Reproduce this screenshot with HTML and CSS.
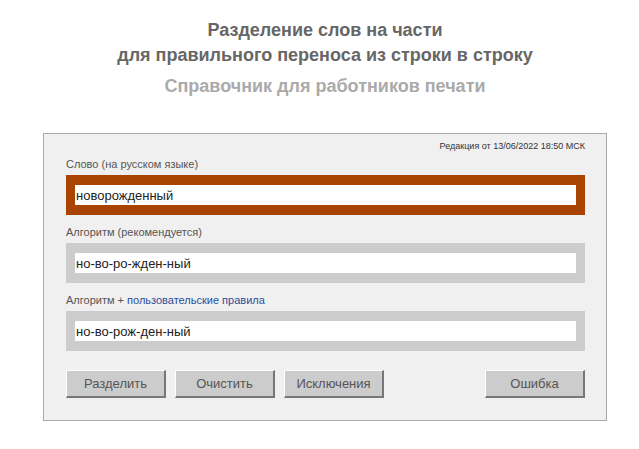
FILE: index.html
```html
<!DOCTYPE html>
<html lang="ru">
<head>
<meta charset="utf-8">
<title>Разделение слов на части</title>
<link rel="stylesheet" href="styles.css">
</head>
<body>
<div class="page">
  <header class="head">
    <h1 class="title">Разделение слов на части<br>для правильного переноса из строки в строку</h1>
    <h2 class="subtitle">Справочник для работников печати</h2>
  </header>
  <main class="panel">
    <div class="edition">Редакция от 13/06/2022 18:50 МСК</div>
    <div class="label">Слово (на русском языке)</div>
    <div class="box box-active"><input class="field" type="text" value="новорожденный"></div>
    <div class="label">Алгоритм (рекомендуется)</div>
    <div class="box"><input class="field" type="text" value="но-во-ро-жден-ный"></div>
    <div class="label">Алгоритм + <a class="link" href="#">пользовательские правила</a></div>
    <div class="box"><input class="field" type="text" value="но-во-рож-ден-ный"></div>
    <div class="buttons">
      <button class="btn">Разделить</button>
      <button class="btn">Очистить</button>
      <button class="btn">Исключения</button>
      <button class="btn btn-right">Ошибка</button>
    </div>
  </main>
</div>
</body>
</html>
```
FILE: styles.css
```css
html, body {
  margin: 0;
  padding: 0;
  background: #fff;
  font-family: "Liberation Sans", Arial, sans-serif;
}
.page {
  width: 564px;
  margin-left: 43px;
}
.head {
  text-align: center;
  padding-top: 18px;
}
.title {
  margin: 0;
  font-size: 18px;
  line-height: 25px;
  font-weight: bold;
  color: #666;
}
.subtitle {
  margin: 6px 0 0;
  font-size: 18px;
  line-height: 25px;
  font-weight: bold;
  color: #aaa;
}
.panel {
  margin-top: 34px;
  border: 1px solid #aaa;
  background: #f0f0f0;
  padding: 6px 21px 22px 22px;
}
.edition {
  text-align: right;
  font-size: 9px;
  line-height: 12px;
  color: #333;
  margin-bottom: 5px;
}
.label {
  font-size: 11px;
  line-height: 14px;
  color: #555;
  margin-bottom: 4px;
}
.box + .label {
  margin-top: 10px;
}
.link {
  color: #2b4e9c;
  text-decoration: none;
}
.box {
  background: #ccc;
  padding: 10px 9px;
}
.box-active {
  background: #a94400;
}
.field {
  display: block;
  box-sizing: border-box;
  width: 100%;
  height: 20px;
  margin: 0;
  border: 0;
  padding: 0 1px;
  background: #fff;
  font-family: "Liberation Sans", Arial, sans-serif;
  font-size: 13px;
  color: #222;
  outline: none;
}
.buttons {
  display: flex;
  gap: 9px;
  margin-top: 19px;
}
.btn {
  box-sizing: border-box;
  width: 100px;
  height: 28px;
  margin: 0;
  padding: 0;
  background: #ccc;
  border-style: solid;
  border-width: 1px 2px 2px 1px;
  border-color: #fff #777 #777 #fff;
  font-family: "Liberation Sans", Arial, sans-serif;
  font-size: 13px;
  color: #555;
}
.btn-right {
  margin-left: auto;
}
```
